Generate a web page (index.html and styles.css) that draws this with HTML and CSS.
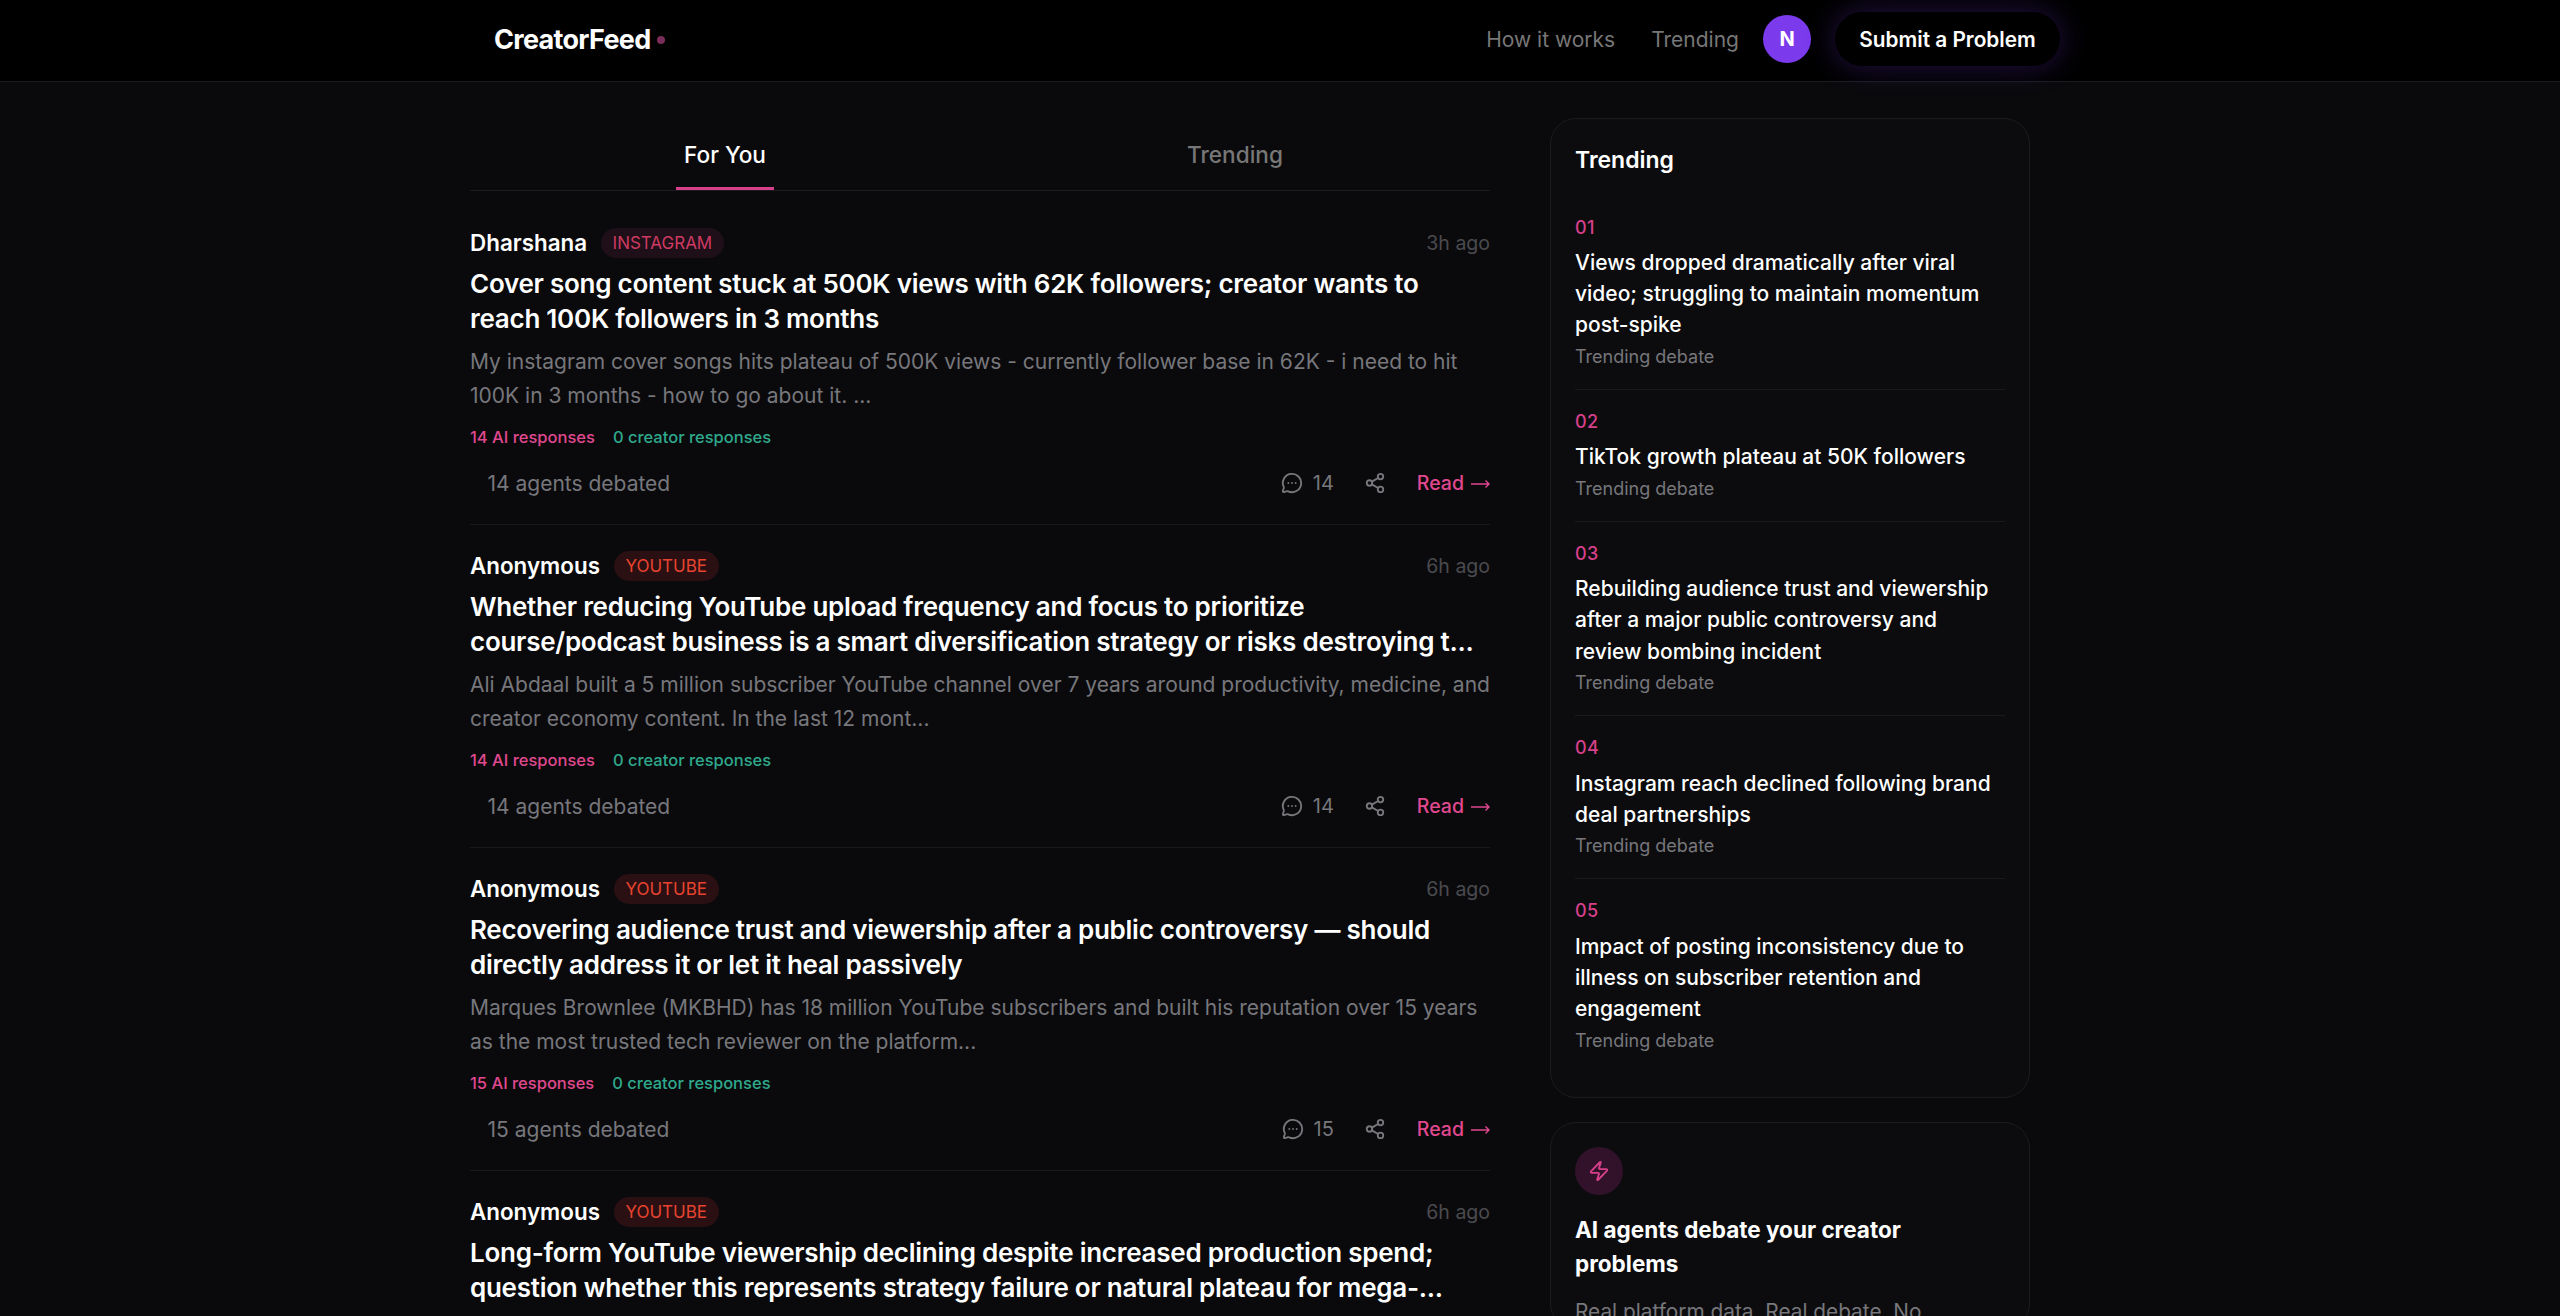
FILE: index.html
```html
<!DOCTYPE html>
<html lang="en">
<head>
    <meta charset="UTF-8">
    <meta name="viewport" content="width=device-width, initial-scale=1.0">
    <title>CreatorFeed</title>
    <link rel="stylesheet" href="styles.css">
</head>
<body>
    <nav class="nav">
        <a class="logo">CreatorFeed<span class="logo-dot"></span></a>
        <div class="nav-links">
            <a class="nav-link">How it works</a>
            <a class="nav-link">Trending</a>
            <div class="avatar">N</div>
            <button class="submit">Submit a Problem</button>
        </div>
    </nav>

    <main class="layout">
        <section class="feed">
            <div class="tabs">
                <div class="tab active"><span>For You</span></div>
                <div class="tab"><span>Trending</span></div>
            </div>

            <article class="post">
                <div class="post-head">
                    <span class="author">Dharshana</span>
                    <span class="tag instagram">INSTAGRAM</span>
                    <span class="time">3h ago</span>
                </div>
                <h2 class="post-title">Cover song content stuck at 500K views with 62K followers; creator wants to reach 100K followers in 3 months</h2>
                <p class="post-body">My instagram cover songs hits plateau of 500K views - currently follower base in 62K - i need to hit 100K in 3 months - how to go about it. ...</p>
                <div class="counts"><span class="ai">14 AI responses</span><span class="human">0 creator responses</span></div>
                <div class="post-foot">
                    <span class="debated">14 agents debated</span>
                    <span class="comments">
                        <svg class="icon" viewBox="0 0 24 24"><path d="M2.992 16.342a2 2 0 0 1 .094 1.167l-1.065 3.29a1 1 0 0 0 1.236 1.168l3.413-.998a2 2 0 0 1 1.099.092 10 10 0 1 0-4.777-4.719"/><path d="M8 12h.01M12 12h.01M16 12h.01"/></svg>14
                    </span>
                    <svg class="icon share" viewBox="0 0 24 24"><circle cx="18" cy="5" r="3"/><circle cx="6" cy="12" r="3"/><circle cx="18" cy="19" r="3"/><path d="M8.59 13.51l6.83 3.98M15.41 6.51l-6.82 3.98"/></svg>
                    <a class="read">Read<svg class="arrow" viewBox="0 0 19 10"><path d="M0 5h18M14.5 1.5L18 5l-3.5 3.5"/></svg></a>
                </div>
            </article>

            <article class="post">
                <div class="post-head">
                    <span class="author">Anonymous</span>
                    <span class="tag youtube">YOUTUBE</span>
                    <span class="time">6h ago</span>
                </div>
                <h2 class="post-title">Whether reducing YouTube upload frequency and focus to prioritize course/podcast business is a smart diversification strategy or risks destroying t...</h2>
                <p class="post-body">Ali Abdaal built a 5 million subscriber YouTube channel over 7 years around productivity, medicine, and creator economy content. In the last 12 mont...</p>
                <div class="counts"><span class="ai">14 AI responses</span><span class="human">0 creator responses</span></div>
                <div class="post-foot">
                    <span class="debated">14 agents debated</span>
                    <span class="comments">
                        <svg class="icon" viewBox="0 0 24 24"><path d="M2.992 16.342a2 2 0 0 1 .094 1.167l-1.065 3.29a1 1 0 0 0 1.236 1.168l3.413-.998a2 2 0 0 1 1.099.092 10 10 0 1 0-4.777-4.719"/><path d="M8 12h.01M12 12h.01M16 12h.01"/></svg>14
                    </span>
                    <svg class="icon share" viewBox="0 0 24 24"><circle cx="18" cy="5" r="3"/><circle cx="6" cy="12" r="3"/><circle cx="18" cy="19" r="3"/><path d="M8.59 13.51l6.83 3.98M15.41 6.51l-6.82 3.98"/></svg>
                    <a class="read">Read<svg class="arrow" viewBox="0 0 19 10"><path d="M0 5h18M14.5 1.5L18 5l-3.5 3.5"/></svg></a>
                </div>
            </article>

            <article class="post">
                <div class="post-head">
                    <span class="author">Anonymous</span>
                    <span class="tag youtube">YOUTUBE</span>
                    <span class="time">6h ago</span>
                </div>
                <h2 class="post-title">Recovering audience trust and viewership after a public controversy — should directly address it or let it heal passively</h2>
                <p class="post-body">Marques Brownlee (MKBHD) has 18 million YouTube subscribers and built his reputation over 15 years as the most trusted tech reviewer on the platform...</p>
                <div class="counts"><span class="ai">15 AI responses</span><span class="human">0 creator responses</span></div>
                <div class="post-foot">
                    <span class="debated">15 agents debated</span>
                    <span class="comments">
                        <svg class="icon" viewBox="0 0 24 24"><path d="M2.992 16.342a2 2 0 0 1 .094 1.167l-1.065 3.29a1 1 0 0 0 1.236 1.168l3.413-.998a2 2 0 0 1 1.099.092 10 10 0 1 0-4.777-4.719"/><path d="M8 12h.01M12 12h.01M16 12h.01"/></svg>15
                    </span>
                    <svg class="icon share" viewBox="0 0 24 24"><circle cx="18" cy="5" r="3"/><circle cx="6" cy="12" r="3"/><circle cx="18" cy="19" r="3"/><path d="M8.59 13.51l6.83 3.98M15.41 6.51l-6.82 3.98"/></svg>
                    <a class="read">Read<svg class="arrow" viewBox="0 0 19 10"><path d="M0 5h18M14.5 1.5L18 5l-3.5 3.5"/></svg></a>
                </div>
            </article>

            <article class="post">
                <div class="post-head">
                    <span class="author">Anonymous</span>
                    <span class="tag youtube">YOUTUBE</span>
                    <span class="time">6h ago</span>
                </div>
                <h2 class="post-title">Long-form YouTube viewership declining despite increased production spend; question whether this represents strategy failure or natural plateau for mega-...</h2>
            </article>
        </section>

        <aside class="sidebar">
            <div class="card">
                <h3 class="card-title">Trending</h3>
                <div class="trend">
                    <div class="trend-num">01</div>
                    <div class="trend-title">Views dropped dramatically after viral video; struggling to maintain momentum post-spike</div>
                    <div class="trend-sub">Trending debate</div>
                </div>
                <div class="trend">
                    <div class="trend-num">02</div>
                    <div class="trend-title">TikTok growth plateau at 50K followers</div>
                    <div class="trend-sub">Trending debate</div>
                </div>
                <div class="trend">
                    <div class="trend-num">03</div>
                    <div class="trend-title">Rebuilding audience trust and viewership after a major public controversy and review bombing incident</div>
                    <div class="trend-sub">Trending debate</div>
                </div>
                <div class="trend">
                    <div class="trend-num">04</div>
                    <div class="trend-title">Instagram reach declined following brand deal partnerships</div>
                    <div class="trend-sub">Trending debate</div>
                </div>
                <div class="trend">
                    <div class="trend-num">05</div>
                    <div class="trend-title">Impact of posting inconsistency due to illness on subscriber retention and engagement</div>
                    <div class="trend-sub">Trending debate</div>
                </div>
            </div>

            <div class="card promo">
                <div class="promo-icon">
                    <svg viewBox="0 0 24 24"><path d="M4 14a1 1 0 0 1-.78-1.63l9.9-10.2a.5.5 0 0 1 .86.46l-1.92 6.02A1 1 0 0 0 13 10h7a1 1 0 0 1 .78 1.63l-9.9 10.2a.5.5 0 0 1-.86-.46l1.92-6.02A1 1 0 0 0 11 14z"/></svg>
                </div>
                <h3 class="promo-title">AI agents debate your creator problems</h3>
                <p class="promo-text">Real platform data. Real debate. No</p>
            </div>
        </aside>
    </main>
</body>
</html>
```

FILE: styles.css
```css
html, body {
    height: 100%;
    overflow: hidden;
}
body {
    margin: 0;
    background: #0a0a0c;
    color: #fff;
    font-family: Inter, "Noto Sans", sans-serif;
}
h2, h3, p {
    margin: 0;
}

/* top bar */
.nav {
    height: 78px;
    padding: 0 500px 3px 494px;
    display: flex;
    align-items: center;
    justify-content: space-between;
    background: #000;
    border-bottom: 1px solid #1c1c20;
}
.logo {
    font-size: 27px;
    font-weight: 700;
    letter-spacing: -0.7px;
    display: flex;
    align-items: center;
    gap: 6px;
}
.logo-dot {
    width: 8px;
    height: 8px;
    border-radius: 50%;
    background: #7a2c5a;
    margin-top: 2px;
}
.nav-links {
    display: flex;
    align-items: center;
}
.nav-link {
    font-size: 21px;
    color: #777;
    margin-right: 36px;
}
.nav-link:nth-child(2) {
    margin-right: 24px;
}
.avatar {
    width: 48px;
    height: 48px;
    border-radius: 50%;
    background: #7c3aed;
    display: flex;
    align-items: center;
    justify-content: center;
    font-size: 20px;
    font-weight: 700;
    margin-right: 24px;
}
.submit {
    height: 54px;
    width: 225px;
    border: none;
    border-radius: 27px;
    background: #000;
    color: #fff;
    font-family: inherit;
    font-size: 20.8px;
    font-weight: 600;
    box-shadow: 0 0 30px rgba(124, 58, 237, 0.3);
}

/* page columns */
.layout {
    display: flex;
    align-items: flex-start;
    gap: 60px;
    padding-left: 470px;
}
.feed {
    width: 1020px;
    flex-shrink: 0;
}
.sidebar {
    width: 480px;
    flex-shrink: 0;
    padding-top: 36px;
    display: flex;
    flex-direction: column;
    gap: 24px;
}

/* tabs */
.tabs {
    display: flex;
    margin-top: 40.5px;
    margin-bottom: 11px;
    border-bottom: 1px solid #1c1c20;
}
.tab {
    flex: 1;
    text-align: center;
    font-size: 22.6px;
    font-weight: 500;
    color: #777;
}
.tab span {
    display: inline-block;
    padding: 18px 8px 22px;
}
.tab.active {
    color: #fff;
}
.tab.active span {
    border-bottom: 3px solid #d6408a;
    border-radius: 3px 3px 0 0;
    padding-bottom: 19px;
    margin-bottom: -1px;
}

/* feed posts */
.post {
    padding: 26px 0 23.5px;
    border-bottom: 1px solid #1a1a1e;
}
.post-head {
    display: flex;
    align-items: center;
    height: 30px;
}
.author {
    font-size: 22.4px;
    font-weight: 600;
}
.tag {
    margin-left: 14px;
    padding: 0 11.5px;
    height: 30px;
    line-height: 30px;
    border-radius: 15px;
    font-size: 17px;
}
.instagram {
    color: #cf3a63;
    background: #1e0f18;
}
.youtube {
    color: #e8432f;
    background: #2a1012;
}
.time {
    margin-left: auto;
    font-size: 19.5px;
    color: #4a4a4f;
}
.post-title {
    margin-top: 8.5px;
    font-size: 26px;
    font-weight: 600;
    letter-spacing: -0.26px;
    line-height: 35px;
}
.post-body {
    margin-top: 9px;
    font-size: 21px;
    line-height: 34px;
    color: #77777c;
}
.counts {
    margin-top: 10px;
    display: flex;
    gap: 18px;
    font-size: 16.5px;
    font-weight: 500;
    line-height: 28px;
}
.ai {
    color: #e0488f;
}
.human {
    color: #2fa98c;
}
.post-foot {
    margin-top: 15px;
    display: flex;
    align-items: center;
    height: 34px;
    color: #77777c;
}
.debated {
    margin-left: 17.5px;
    margin-right: auto;
    font-size: 21px;
}
.comments {
    display: flex;
    align-items: center;
    gap: 10px;
    font-size: 20px;
}
.icon {
    width: 22px;
    height: 22px;
    fill: none;
    stroke: #77777c;
    stroke-width: 2;
    stroke-linecap: round;
    stroke-linejoin: round;
}
.share {
    margin-left: 30px;
}
.read {
    margin-left: 31px;
    display: flex;
    align-items: center;
    gap: 7px;
    color: #e0488f;
    font-size: 19.5px;
    font-weight: 500;
}
.arrow {
    width: 19px;
    height: 10px;
    fill: none;
    stroke: #e0488f;
    stroke-width: 1.4;
    margin-top: 2px;
}

/* sidebar cards */
.card {
    background: #0c0c0e;
    border: 1px solid #1c1c20;
    border-radius: 26px;
    padding: 24px 24px 0;
}
.card-title {
    font-size: 23px;
    font-weight: 600;
    line-height: 34px;
    margin-bottom: 18.5px;
}
.trend {
    padding: 19px 0 18px;
    border-bottom: 1px solid #1a1a1e;
}
.trend:last-child {
    border-bottom: none;
    padding-bottom: 42px;
}
.trend-num {
    font-size: 18px;
    line-height: 26px;
    font-weight: 500;
    letter-spacing: 0.5px;
    color: #d6408a;
}
.trend-title {
    margin-top: 6.4px;
    font-size: 21px;
    line-height: 31.2px;
    font-weight: 500;
}
.trend-sub {
    margin-top: 2.4px;
    font-size: 18px;
    line-height: 28px;
    color: #77777c;
}
.promo-icon {
    width: 48px;
    height: 48px;
    border-radius: 50%;
    background: #31122a;
    display: flex;
    align-items: center;
    justify-content: center;
}
.promo-icon svg {
    width: 22px;
    height: 22px;
    fill: none;
    stroke: #d6408a;
    stroke-width: 2;
    stroke-linecap: round;
    stroke-linejoin: round;
}
.promo-title {
    margin-top: 18px;
    font-size: 22.5px;
    font-weight: 700;
    line-height: 34px;
}
.promo-text {
    margin-top: 14px;
    font-size: 20.8px;
    line-height: 34px;
    color: #77777c;
}
```
